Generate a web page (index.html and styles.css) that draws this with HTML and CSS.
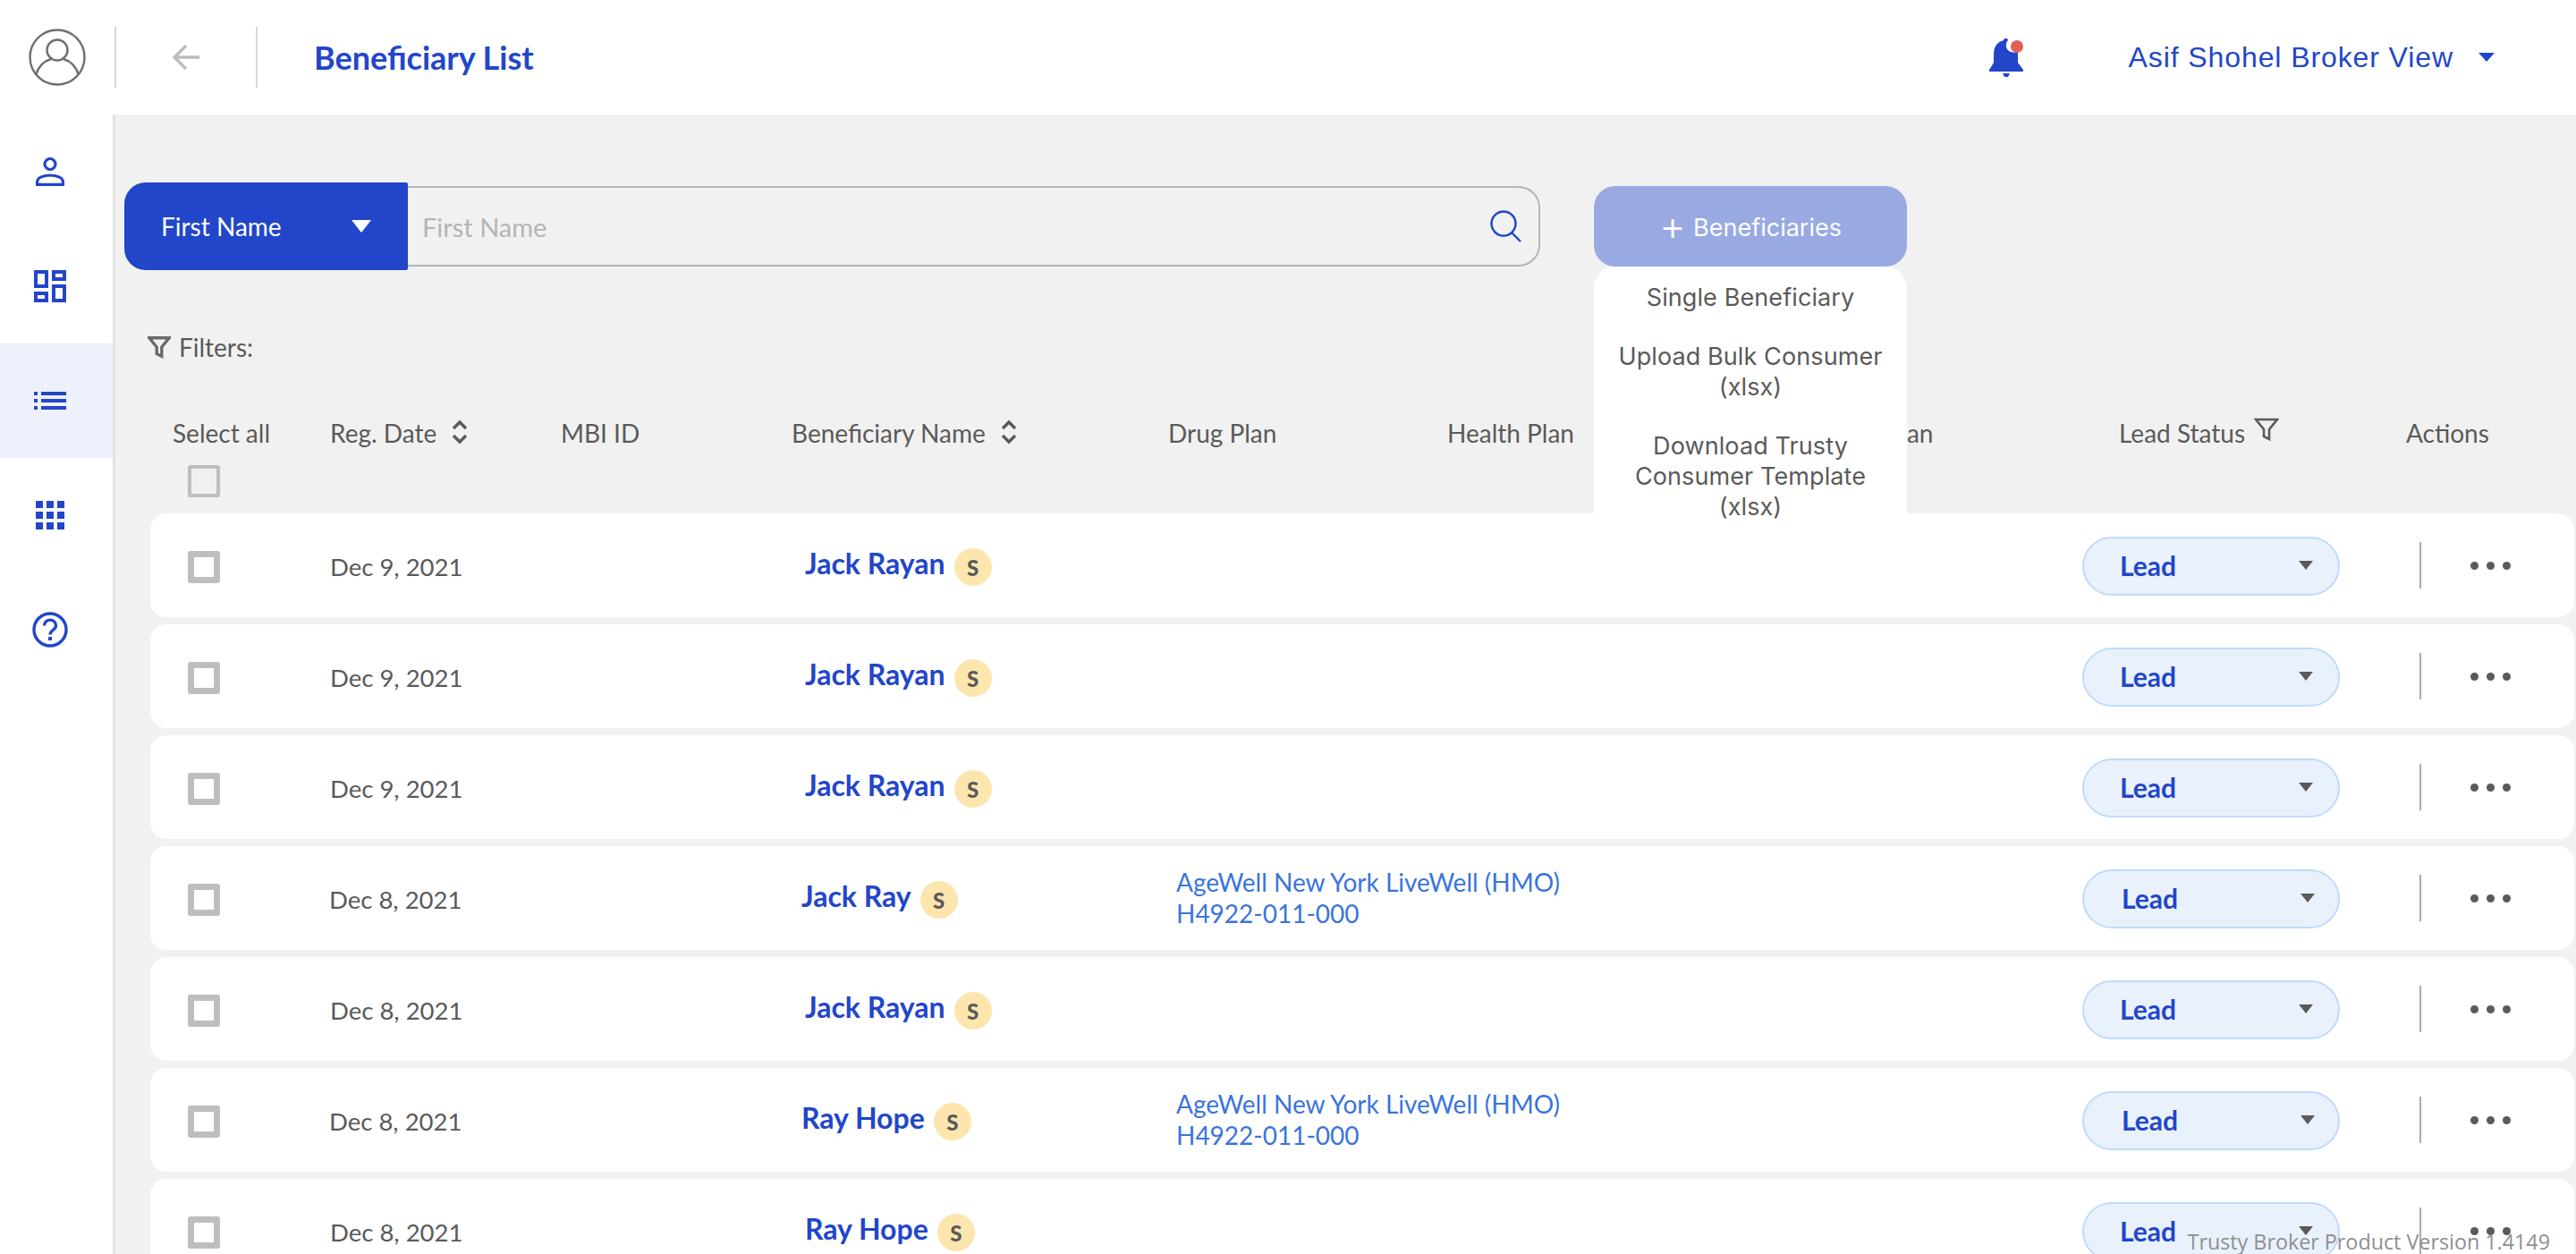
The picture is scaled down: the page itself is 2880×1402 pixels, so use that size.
FILE: index.html
```html
<!DOCTYPE html>
<html lang="en">
<head>
  <meta charset="UTF-8" />
  <title>Beneficiary List</title>
  <link rel="stylesheet" href="styles.css">
</head>
<body>

  <svg class="sprites" width="0" height="0">
    <symbol id="funnel" viewBox="0 0 28 26">
      <path d="M2 2h24L17 13v11l-6-3v-8z" fill="none" stroke="currentColor" stroke-linejoin="miter"/>
    </symbol>
    <symbol id="sort" viewBox="0 0 20 28">
      <path d="M3 10l7-7 7 7M3 18l7 7 7-7" fill="none" stroke="currentColor" stroke-width="3.4"/>
    </symbol>
  </svg>

  <header class="topbar">
    <svg class="avatar" viewBox="0 0 64 64">
      <circle cx="32" cy="32" r="30.5" fill="none" stroke="#6f6f6f" stroke-width="2.4"/>
      <circle cx="32" cy="24" r="11.5" fill="none" stroke="#6f6f6f" stroke-width="2.4"/>
      <path d="M8 52c3-10 10-16 17-18M56 52c-3-10-10-16-17-18" fill="none" stroke="#6f6f6f" stroke-width="2.4"/>
    </svg>
    <span class="topbar-sep"></span>
    <svg class="back" viewBox="0 0 32 32">
      <path d="M31 16H3M16 3L3 16l13 13" fill="none" stroke="#bdbdbd" stroke-width="3.4"/>
    </svg>
    <span class="topbar-sep"></span>
    <h1 class="title">Beneficiary List</h1>
    <svg class="bell" viewBox="0 0 38 43">
      <path d="M17 0h3l1 2c-3 3-3 9 1 12 3 2 7 2 10 1v12l6 8v2H0v-2l5-8V18C5 9 9 4 16 2z" fill="#2246c9"/>
      <path d="M15 39h8l-2 4h-4z" fill="#2246c9"/>
      <circle cx="31" cy="9" r="7" fill="#e0605a"/>
    </svg>
    <span class="user">Asif Shohel Broker View</span>
    <span class="caret"></span>
  </header>

  <div class="layout">
    <nav class="sidebar">
      <a class="nav-item">
        <svg width="32" height="32" viewBox="0 0 32 32">
          <circle cx="16" cy="7.5" r="6" fill="none" stroke="#2246c9" stroke-width="3.2"/>
          <path d="M1.6 30.4v-3.2c0-4.5 7-7.2 14.4-7.2s14.4 2.7 14.4 7.2v3.2z" fill="none" stroke="#2246c9" stroke-width="3.2"/>
        </svg>
      </a>
      <a class="nav-item">
        <svg width="36" height="36" viewBox="0 0 36 36">
          <path d="M2 2h12v16H2zM22 2h12v8H22zM2 26h12v8H2zM22 18h12v16H22z" fill="none" stroke="#2246c9" stroke-width="4"/>
        </svg>
      </a>
      <a class="nav-item nav-item-active">
        <svg width="36" height="20" viewBox="0 0 36 20" fill="#2246c9">
          <path d="M0 0h4v4H0zM8 0h28v4H8zM0 8h4v4H0zM8 8h28v4H8zM0 16h4v4H0zM8 16h28v4H8z"/>
        </svg>
      </a>
      <a class="nav-item">
        <svg width="32" height="32" viewBox="0 0 32 32" fill="#2246c9">
          <path d="M0 0h8v8H0zM12 0h8v8h-8zM24 0h8v8h-8zM0 12h8v8H0zM12 12h8v8h-8zM24 12h8v8h-8zM0 24h8v8H0zM12 24h8v8h-8zM24 24h8v8h-8z"/>
        </svg>
      </a>
      <a class="nav-item">
        <svg width="40" height="40" viewBox="0 0 40 40">
          <circle cx="20" cy="20" r="18" fill="none" stroke="#2246c9" stroke-width="3.4"/>
          <path d="M13.5 15.5c0-8.5 13-8.5 13 0 0 5-6.5 5-6.5 10" fill="none" stroke="#2246c9" stroke-width="3.4"/>
          <path d="M18 28h4v4h-4z" fill="#2246c9"/>
        </svg>
      </a>
    </nav>

    <main class="content">
      <div class="toolbar">
        <div class="search-type">First Name <span class="search-arrow"></span></div>
        <div class="search-box">
          <span class="placeholder">First Name</span>
          <svg class="search-icon" width="36" height="36" viewBox="0 0 36 36">
            <circle cx="15" cy="15" r="13.5" fill="none" stroke="#2246c9" stroke-width="2.4"/>
            <path d="M24 25l10 10" fill="none" stroke="#2246c9" stroke-width="2.4"/>
          </svg>
        </div>
        <div class="add-wrap">
          <div class="add-btn"><span class="add-plus">+</span> Beneficiaries</div>
          <div class="add-menu">
            <div class="menu-item">Single Beneficiary</div>
            <div class="menu-item">Upload Bulk Consumer<br>(xlsx)</div>
            <div class="menu-item">Download Trusty<br>Consumer Template<br>(xlsx)</div>
          </div>
        </div>
      </div>

      <div class="filters">
        <svg class="filters-icon" width="26" height="26"><use href="#funnel"/></svg>
        Filters:
      </div>

      <div class="table-head">
        <div class="head-select">
          Select all
          <span class="checkbox checkbox-head"></span>
        </div>
        <div>Reg. Date <svg class="sort-icon" width="20" height="28"><use href="#sort"/></svg></div>
        <div>MBI ID</div>
        <div>Beneficiary Name <svg class="sort-icon" width="20" height="28"><use href="#sort"/></svg></div>
        <div>Drug Plan</div>
        <div>Health Plan</div>
        <div>Other Plan</div>
        <div>Lead Status <svg class="status-icon" width="28" height="26"><use href="#funnel"/></svg></div>
        <div>Actions</div>
      </div>

      <div class="rows">
        <div class="row">
          <span class="checkbox"></span>
          <span class="date">Dec 9, 2021</span>
          <span class="name"><a>Jack Rayan</a><b class="badge">S</b></span>
          <span class="plan"></span>
          <span class="status">Lead<i class="status-arrow"></i></span>
          <span class="actions"><i class="dot"></i><i class="dot"></i><i class="dot"></i></span>
        </div>
        <div class="row">
          <span class="checkbox"></span>
          <span class="date">Dec 9, 2021</span>
          <span class="name"><a>Jack Rayan</a><b class="badge">S</b></span>
          <span class="plan"></span>
          <span class="status">Lead<i class="status-arrow"></i></span>
          <span class="actions"><i class="dot"></i><i class="dot"></i><i class="dot"></i></span>
        </div>
        <div class="row">
          <span class="checkbox"></span>
          <span class="date">Dec 9, 2021</span>
          <span class="name"><a>Jack Rayan</a><b class="badge">S</b></span>
          <span class="plan"></span>
          <span class="status">Lead<i class="status-arrow"></i></span>
          <span class="actions"><i class="dot"></i><i class="dot"></i><i class="dot"></i></span>
        </div>
        <div class="row row-plan">
          <span class="checkbox"></span>
          <span class="date">Dec 8, 2021</span>
          <span class="name"><a>Jack Ray</a><b class="badge">S</b></span>
          <span class="plan">AgeWell New York LiveWell (HMO)<br>H4922-011-000</span>
          <span class="status">Lead<i class="status-arrow"></i></span>
          <span class="actions"><i class="dot"></i><i class="dot"></i><i class="dot"></i></span>
        </div>
        <div class="row">
          <span class="checkbox"></span>
          <span class="date">Dec 8, 2021</span>
          <span class="name"><a>Jack Rayan</a><b class="badge">S</b></span>
          <span class="plan"></span>
          <span class="status">Lead<i class="status-arrow"></i></span>
          <span class="actions"><i class="dot"></i><i class="dot"></i><i class="dot"></i></span>
        </div>
        <div class="row row-plan">
          <span class="checkbox"></span>
          <span class="date">Dec 8, 2021</span>
          <span class="name"><a>Ray Hope</a><b class="badge">S</b></span>
          <span class="plan">AgeWell New York LiveWell (HMO)<br>H4922-011-000</span>
          <span class="status">Lead<i class="status-arrow"></i></span>
          <span class="actions"><i class="dot"></i><i class="dot"></i><i class="dot"></i></span>
        </div>
        <div class="row">
          <span class="checkbox"></span>
          <span class="date">Dec 8, 2021</span>
          <span class="name"><a>Ray Hope</a><b class="badge">S</b></span>
          <span class="plan"></span>
          <span class="status">Lead<i class="status-arrow"></i></span>
          <span class="actions"><i class="dot"></i><i class="dot"></i><i class="dot"></i></span>
        </div>
      </div>
    </main>
  </div>

  <footer class="version">Trusty Broker Product Version 1.4149</footer>

</body>
</html>
```

FILE: styles.css
```css
html, body {
  height: 100%;
  margin: 0;
}
body {
  font-family: Lato, 'Noto Sans', sans-serif;
  font-size: 28px;
  color: #5a5a5a;
  background-color: #f1f1f1;
  overflow: hidden;
  position: relative;
}
.sprites {
  position: absolute;
}

/* top bar */
.topbar {
  height: 128px;
  background-color: #fff;
  display: flex;
  align-items: center;
  padding-left: 32px;
}
.avatar {
  width: 64px;
  height: 64px;
}
.topbar-sep {
  width: 2px;
  height: 68px;
  background-color: #d9d9d9;
  margin-left: 32px;
}
.back {
  width: 32px;
  height: 32px;
  margin-left: 62px;
}
.back + .topbar-sep {
  margin-left: 62px;
}
.title {
  margin: 0 0 0 63px;
  font-size: 36px;
  font-weight: 700;
  color: #2246c9;
  flex: 1;
}
.bell {
  width: 38px;
  height: 43px;
  margin-top: 1px;
}
.user {
  font-family: 'Liberation Sans', sans-serif;
  font-size: 32px;
  letter-spacing: 0.9px;
  color: #2246c9;
  margin-left: 118px;
}
.caret {
  width: 0;
  height: 0;
  border-left: 9px solid transparent;
  border-right: 9px solid transparent;
  border-top: 10px solid #2246c9;
  margin-left: 28px;
  margin-right: 91px;
}

/* sidebar */
.layout {
  display: flex;
  height: 1274px;
}
.sidebar {
  width: 126px;
  flex: none;
  background-color: #fff;
  border-right: 3px solid #e2e2e2;
}
.nav-item {
  height: 128px;
  display: flex;
  align-items: center;
  justify-content: center;
  padding-right: 14px;
}
.nav-item-active {
  background-color: #eef0fb;
}

/* search bar */
.content {
  flex: 1;
  min-width: 0;
  padding: 76px 0 0 10px;
}
.toolbar {
  display: flex;
  align-items: center;
  height: 98px;
}
.search-type {
  width: 317px;
  height: 98px;
  box-sizing: border-box;
  padding: 0 41px 0 41px;
  background-color: #2246c9;
  border-radius: 24px 2px 2px 24px;
  color: #fff;
  font-size: 28px;
  display: flex;
  align-items: center;
  justify-content: space-between;
}
.search-arrow {
  width: 0;
  height: 0;
  border-left: 11px solid transparent;
  border-right: 11px solid transparent;
  border-top: 14px solid #fff;
}
.search-box {
  width: 1266px;
  height: 90px;
  box-sizing: border-box;
  border: 2px solid #b5b5b5;
  border-left: none;
  border-radius: 0 24px 24px 0;
  display: flex;
  align-items: center;
  justify-content: space-between;
  padding: 0 18px 0 16px;
}
.placeholder {
  font-size: 29px;
  color: #b4b4b4;
}
.add-wrap {
  position: relative;
  width: 350px;
  margin-left: 60px;
}
.add-btn {
  height: 90px;
  padding-top: 2px;
  box-sizing: border-box;
  background-color: #99a9e2;
  border-radius: 24px;
  color: #fff;
  font-family: Inter, sans-serif;
  font-size: 27px;
  display: flex;
  align-items: center;
  justify-content: center;
  gap: 8px;
}
.add-plus {
  font-size: 46px;
  font-weight: 300;
  line-height: 1;
  margin-top: -4px;
}
.add-menu {
  position: absolute;
  top: 90px;
  left: 0;
  width: 350px;
  height: 290px;
  padding-top: 18px;
  box-sizing: border-box;
  background-color: #fff;
  border-radius: 24px 24px 0 0;
  font-family: Inter, sans-serif;
  font-size: 27px;
  letter-spacing: 0.1px;
  line-height: 34px;
  text-align: center;
  z-index: 2;
}
.menu-item {
  margin-bottom: 32px;
}

/* filters and table head */
.filters {
  display: flex;
  align-items: center;
  gap: 9px;
  margin: 69px 0 0 26px;
  line-height: 34px;
}
.filters-icon {
  stroke-width: 3.6;
  color: #6a6a6a;
}
.table-head {
  display: grid;
  grid-template-columns: 176px 258px 258px 421px 312px 411px 340px 321px 1fr;
  margin: 62px 0 18px 29px;
  padding-left: 25px;
  line-height: 34px;
}
.table-head > div {
  display: flex;
  align-items: flex-start;
  gap: 16px;
  white-space: nowrap;
}
.table-head > .head-select {
  display: block;
}
.sort-icon {
  margin-top: 2px;
}
.status-icon {
  margin-top: 0;
  margin-left: -6px;
  stroke-width: 2.6;
}
.checkbox {
  display: block;
  width: 36px;
  height: 36px;
  box-sizing: border-box;
  border: 7px solid #bebebe;
  border-radius: 3px;
  background-color: #fff;
  margin-top: 3px;
}
.checkbox-head {
  border-width: 4px;
  background: none;
  margin: 19px 0 0 17px;
}

/* rows */
.rows {
  margin-left: 29px;
  margin-right: 2px;
  display: flex;
  flex-direction: column;
  gap: 8px;
}
.row {
  display: grid;
  grid-template-columns: 160px 530px 415px 1013px 377px 1fr;
  align-items: center;
  height: 116px;
  flex: none;
  padding-left: 42px;
  background-color: #fff;
  border-radius: 18px;
}
.date {
  font-size: 27.5px;
  white-space: nowrap;
  margin-top: 3px;
  margin-left: -1px;
}
.name {
  display: flex;
  align-items: center;
  gap: 10px;
  font-size: 32px;
  font-weight: 700;
  color: #2246c9;
}
.name a {
  margin-top: -6px;
}
.badge {
  width: 42px;
  height: 42px;
  border-radius: 50%;
  background-color: #fce6ae;
  color: #5a5a5a;
  font-size: 24px;
  display: flex;
  align-items: center;
  justify-content: center;
  margin-top: 4px;
}
.plan {
  line-height: 35px;
  color: #3a74dc;
  white-space: nowrap;
}
.status {
  width: 288px;
  height: 66px;
  box-sizing: border-box;
  margin-top: 2px;
  padding: 0 28px 3px 40px;
  background-color: #e9f1fd;
  border: 2px solid #bfdbfb;
  border-radius: 33px;
  font-size: 30px;
  font-weight: 700;
  color: #2246c9;
  display: flex;
  align-items: center;
  justify-content: space-between;
}
.status-arrow {
  width: 0;
  height: 0;
  border-left: 8px solid transparent;
  border-right: 8px solid transparent;
  border-top: 10px solid #5a5a5a;
}
.row-plan .date {
  margin-left: -2px;
}
.row-plan .name {
  margin-left: -4px;
}
.row-plan .status {
  padding-left: 42px;
  padding-right: 26px;
}
.actions {
  height: 52px;
  border-left: 2px solid #aaa;
  padding-left: 55px;
  display: flex;
  align-items: center;
  gap: 9px;
}
.dot {
  width: 9px;
  height: 9px;
  border-radius: 50%;
  background-color: #5a5a5a;
}

/* version tag sits over the table */
.version {
  position: absolute;
  right: 29px;
  bottom: 0;
  font-family: 'Open Sans', sans-serif;
  font-size: 23.3px;
  line-height: 28px;
  color: #8f8f8f;
  z-index: 3;
}
```
